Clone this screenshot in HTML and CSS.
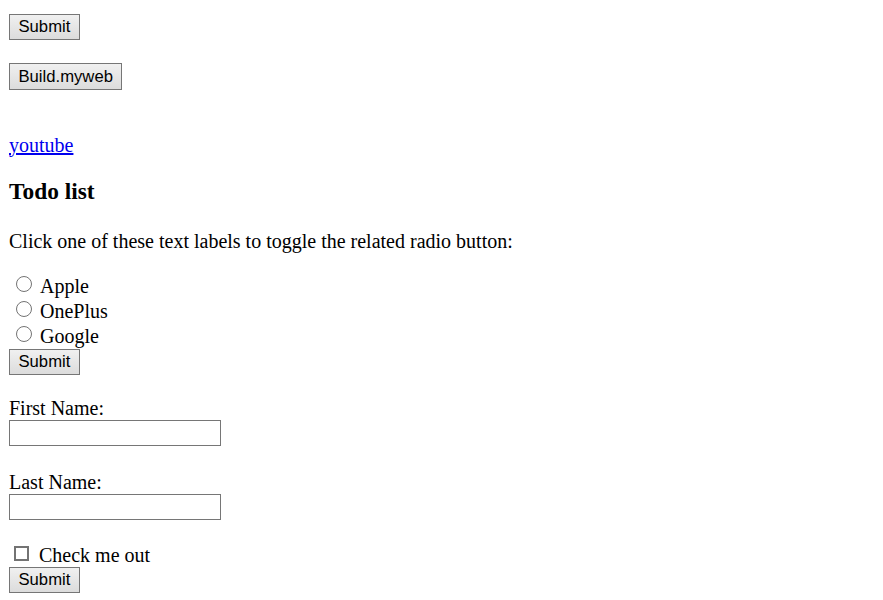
FILE: index.html
```html
<!DOCTYPE html>
<html>
<head>
<meta charset="utf-8">
<link rel="stylesheet" href="styles.css">
</head>
<body>
<div class="page">
  <div class="btn-row"><button class="btn">Submit</button></div>
  <div class="btn-row second"><button class="btn tall">Build.myweb</button></div>
  <div class="link-row"><a href="#" class="link">youtube</a></div>
  <h3 class="title">Todo list</h3>
  <p class="intro">Click one of these text labels to toggle the related radio button:</p>
  <div class="radios">
    <label class="opt"><span class="radio"></span>Apple</label>
    <label class="opt"><span class="radio"></span>OnePlus</label>
    <label class="opt"><span class="radio"></span>Google</label>
  </div>
  <div class="btn-row"><button class="btn">Submit</button></div>
  <div class="field first-field">
    <div class="label">First Name:</div>
    <div class="input"></div>
  </div>
  <div class="field last-field">
    <div class="label">Last Name:</div>
    <div class="input"></div>
  </div>
  <label class="check-row"><span class="checkbox"></span>Check me out</label>
  <div class="btn-row"><button class="btn">Submit</button></div>
</div>
</body>
</html>
```
FILE: styles.css
```css
html, body { margin: 0; padding: 0; background: #fff; }
body { font-family: "Liberation Serif", "Times New Roman", serif; font-size: 20px; color: #000; }
.page { padding: 14px 9px 0 9px; }
.btn-row { display: flex; }
.btn {
  font-family: "Liberation Sans", Arial, sans-serif;
  font-size: 16.67px;
  color: #000;
  height: 26px;
  padding: 0 8.5px;
  border: 1px solid #767676;
  border-radius: 0;
  background: linear-gradient(#f0f0f0, #dcdcdc);
  line-height: 24px;
}
.tall { height: 27px; }
.second { margin-top: 23px; }
.link-row { margin-top: 43.5px; line-height: 23px; }
.link { color: #0000ee; text-decoration: underline; }
.title { font-size: 23.4px; font-weight: bold; margin: 21px 0 0 0; line-height: 27px; }
.intro { margin: 25px 0 0 0; line-height: 23px; }
.radios { margin-top: 21px; display: flex; flex-direction: column; }
.opt { display: flex; align-items: flex-start; height: 25px; line-height: 25px; }
.radio {
  width: 16px; height: 16px; border: 1.5px solid #737373; border-radius: 50%;
  box-sizing: border-box; margin: 2px 8.5px 0 6.5px; flex: none;
}
.first-field { margin-top: 22.5px; }
.last-field { margin-top: 24.5px; }
.field { display: flex; flex-direction: column; }
.label { line-height: 23px; }
.input { width: 212px; height: 26px; border: 1px solid #767676; box-sizing: border-box; }
.check-row { display: flex; align-items: flex-start; margin-top: 24.5px; height: 23px; line-height: 23px; }
.checkbox { width: 15px; height: 15px; border: 2px solid #737373; box-sizing: border-box; margin: 1.5px 10px 0 5px; flex: none; }
```
